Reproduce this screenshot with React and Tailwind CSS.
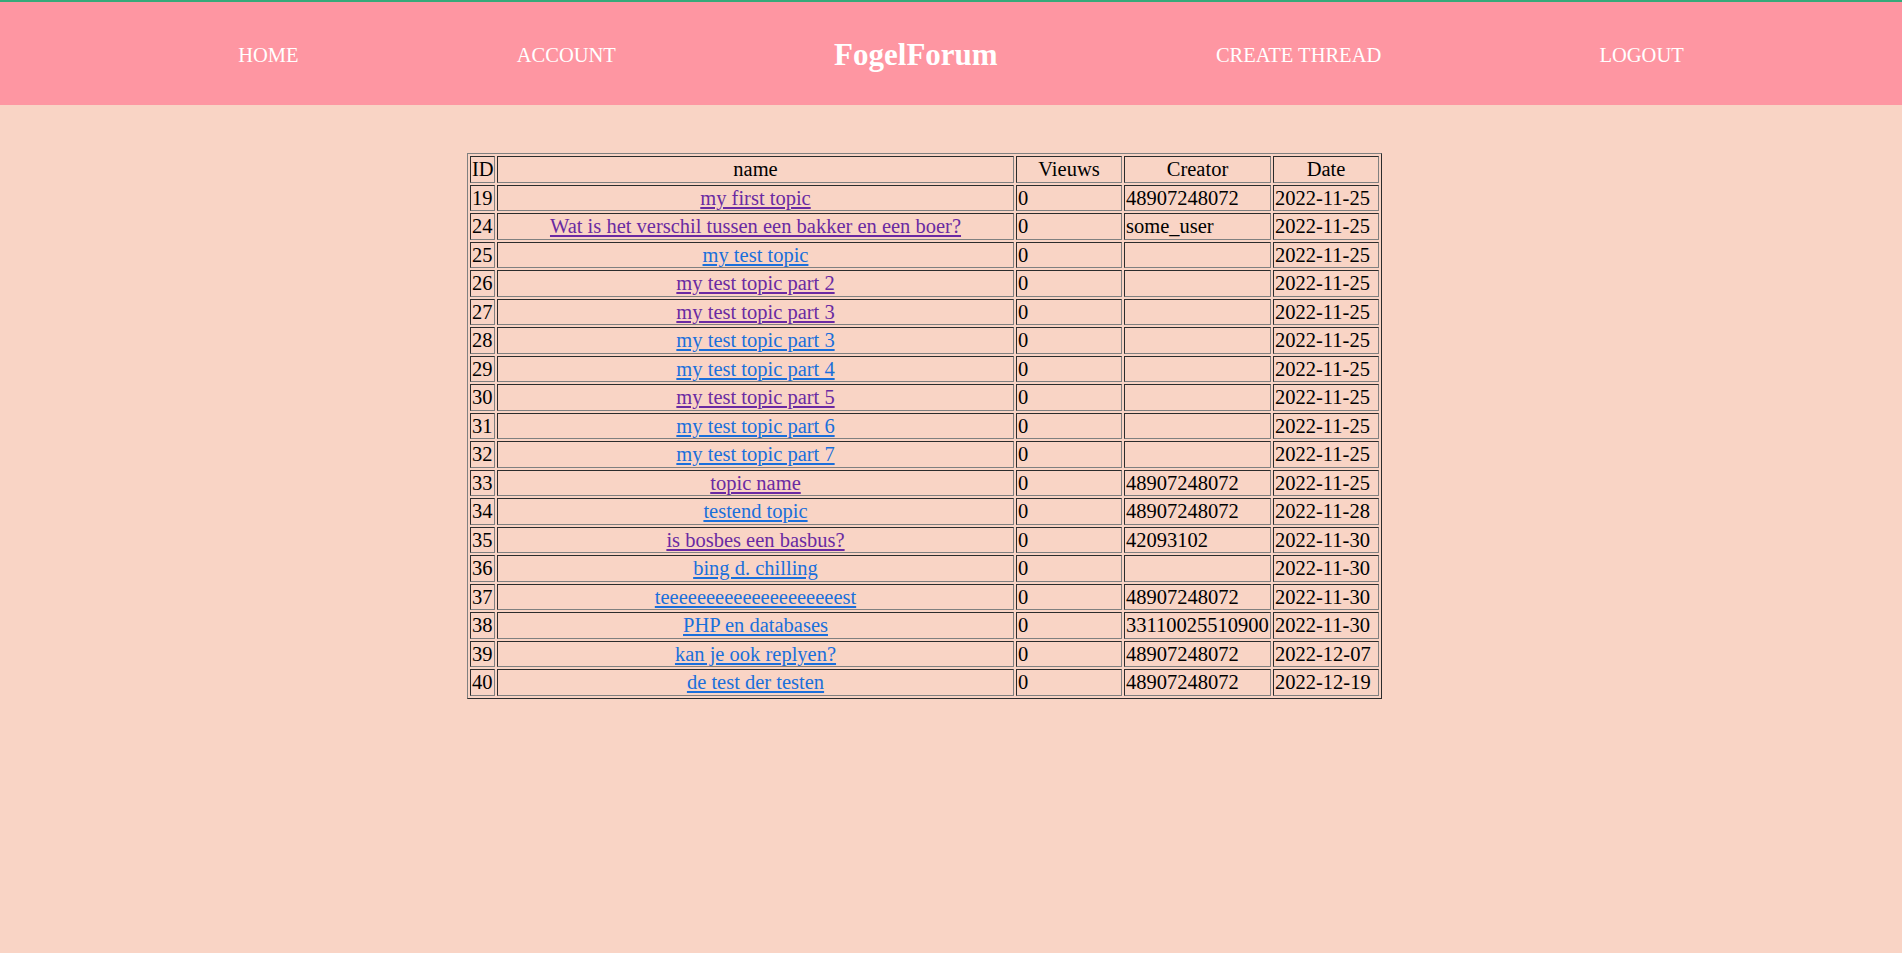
import React from 'react';

const threads = [
  { id: 19, name: 'my first topic', creator: '48907248072', date: '2022-11-25', visited: true },
  { id: 24, name: 'Wat is het verschil tussen een bakker en een boer?', creator: 'some_user', date: '2022-11-25', visited: true },
  { id: 25, name: 'my test topic', creator: '', date: '2022-11-25' },
  { id: 26, name: 'my test topic part 2', creator: '', date: '2022-11-25', visited: true },
  { id: 27, name: 'my test topic part 3', creator: '', date: '2022-11-25', visited: true },
  { id: 28, name: 'my test topic part 3', creator: '', date: '2022-11-25' },
  { id: 29, name: 'my test topic part 4', creator: '', date: '2022-11-25' },
  { id: 30, name: 'my test topic part 5', creator: '', date: '2022-11-25', visited: true },
  { id: 31, name: 'my test topic part 6', creator: '', date: '2022-11-25' },
  { id: 32, name: 'my test topic part 7', creator: '', date: '2022-11-25' },
  { id: 33, name: 'topic name', creator: '48907248072', date: '2022-11-25', visited: true },
  { id: 34, name: 'testend topic', creator: '48907248072', date: '2022-11-28' },
  { id: 35, name: 'is bosbes een basbus?', creator: '42093102', date: '2022-11-30', visited: true },
  { id: 36, name: 'bing d. chilling', creator: '', date: '2022-11-30' },
  { id: 37, name: 'teeeeeeeeeeeeeeeeeeeest', creator: '48907248072', date: '2022-11-30' },
  { id: 38, name: 'PHP en databases', creator: '33110025510900', date: '2022-11-30' },
  { id: 39, name: 'kan je ook replyen?', creator: '48907248072', date: '2022-12-07' },
  { id: 40, name: 'de test der testen', creator: '48907248072', date: '2022-12-19' },
];

const cell = 'border border-[gray] [border-style:inset] p-[1px] align-middle';

function Nav() {
  return (
    <header className="h-[105px] bg-[#fe96a2] border-t-2 border-[#36a97a] flex items-center justify-evenly text-white">
      <a href="#" className="text-[20.5px] pl-[20px] mt-[3px]">HOME</a>
      <a href="#" className="text-[20.5px] mt-[3px]">ACCOUNT</a>
      <h1 className="text-[31px] font-bold mt-[3px]">FogelForum</h1>
      <a href="#" className="text-[20.5px] mt-[3px]">CREATE THREAD</a>
      <a href="#" className="text-[20.5px] mt-[3px]">LOGOUT</a>
    </header>
  );
}

export default function App() {
  return (
    <div className="min-h-screen bg-[#f9d4c5] font-['Liberation_Serif',serif] text-black">
      <Nav />
      <main className="pt-[48px] pl-[467px]">
        <table className="table-fixed w-[915px] border-separate border-spacing-[2px] border border-[gray] [border-style:outset] text-[20.5px] leading-[22.5px]">
          <colgroup>
            <col className="w-[25px]" />
            <col className="w-[517px]" />
            <col className="w-[106px]" />
            <col className="w-[147px]" />
            <col className="w-[106px]" />
          </colgroup>
          <thead>
            <tr>
              <th className={`${cell} font-normal text-left`}>ID</th>
              <th className={`${cell} font-normal`}>name</th>
              <th className={`${cell} font-normal`}>Vieuws</th>
              <th className={`${cell} font-normal`}>Creator</th>
              <th className={`${cell} font-normal`}>Date</th>
            </tr>
          </thead>
          <tbody>
            {threads.map((t) => (
              <tr key={t.id}>
                <td className={cell}>{t.id}</td>
                <td className={`${cell} text-center`}>
                  <a href="#" className={`underline ${t.visited ? 'text-[#6a2aa2]' : 'text-[#1a6fdb]'}`}>{t.name}</a>
                </td>
                <td className={cell}>0</td>
                <td className={`${cell} whitespace-nowrap`}>{t.creator}</td>
                <td className={`${cell} whitespace-nowrap`}>{t.date}</td>
              </tr>
            ))}
          </tbody>
        </table>
      </main>
    </div>
  );
}
